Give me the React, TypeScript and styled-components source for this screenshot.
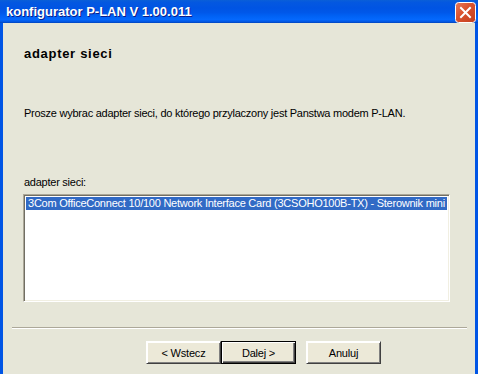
import React from "react";
import styled, { createGlobalStyle } from "styled-components";

const GlobalStyle = createGlobalStyle`
    html, body {
        margin: 0;
        padding: 0;
        background: #e6e6d8;
    }
    * {
        box-sizing: border-box;
    }
`;

const Window = styled.div`
    width: 478px;
    height: 374px;
    overflow: hidden;
    display: flex;
    flex-direction: column;
    font-family: "Liberation Sans", Arial, sans-serif;
    color: #000;
`;

const TitleBar = styled.div`
    height: 23px;
    flex: none;
    display: flex;
    align-items: center;
    justify-content: space-between;
    padding: 0 2px 0 6px;
    background: linear-gradient(
        to bottom,
        #0a5fd8 0%,
        #0458e0 10%,
        #0054e3 35%,
        #0058ea 55%,
        #0062f5 70%,
        #0468fd 85%,
        #0355e0 95%,
        #0043b8 100%
    );
`;

const Title = styled.span`
    font-family: "Liberation Sans", Arial, sans-serif;
    font-weight: bold;
    font-size: 13px;
    color: #fff;
    text-shadow: 1px 1px 0 #0a1e8a;
`;

const CloseButton = styled.div`
    width: 21px;
    height: 21px;
    display: flex;
    margin-top: 1px;
`;

const Body = styled.div`
    flex: 1;
    display: flex;
    flex-direction: column;
    border-left: 3px solid #0055e5;
    border-right: 3px solid #0055e5;
    padding-top: 24px;
`;

const Heading = styled.div`
    margin-left: 21px;
    font-weight: bold;
    font-size: 13px;
    line-height: 14px;
    letter-spacing: 0.7px;
`;

const Text = styled.div<{ $top: number }>`
    margin-left: 21px;
    margin-top: ${ (props) => props.$top + "px" };
    font-size: 11px;
    line-height: 13px;
    letter-spacing: -0.25px;
`;

const ListBox = styled.div`
    margin: 5px 0 0 20px;
    width: 427px;
    height: 108px;
    background: #fff;
    border-top: 1px solid #aca899;
    border-left: 1px solid #aca899;
    border-bottom: 1px solid #fff;
    border-right: 1px solid #fff;
    box-shadow: inset 1px 1px 0 #716f64, inset -1px -1px 0 #f1efe2;
    padding: 2px;
`;

const ListItem = styled.div<{ $selected?: boolean }>`
    height: 13px;
    font-size: 11px;
    line-height: 13px;
    letter-spacing: -0.24px;
    padding-left: 2px;
    white-space: nowrap;
    color: ${ (props) => props.$selected ? "#fff" : "#000" };
    background: ${ (props) => props.$selected ? "#316ac5" : "transparent" };
`;

const Separator = styled.div`
    margin: 25px 8px 0 9px;
    height: 2px;
    border-top: 1px solid #aca899;
    border-bottom: 1px solid #fff;
`;

const ButtonRow = styled.div`
    display: flex;
    margin-top: 12px;
    padding-left: 143px;
`;

const Button = styled.div<{ $default?: boolean; $gap?: number }>`
    width: 75px;
    height: 23px;
    margin-left: ${ (props) => (props.$gap || 0) + "px" };
    display: flex;
    align-items: center;
    justify-content: center;
    font-size: 11px;
    letter-spacing: -0.2px;
    background: #ece9d8;
    border: 1px solid ${ (props) => props.$default ? "#000" : "transparent" };
    box-shadow: ${ (props) => props.$default
        ? "inset 1px 1px 0 #fff, inset -1px -1px 0 #404040, inset -2px -2px 0 #808080"
        : "inset 1px 1px 0 #fff, inset -1px -1px 0 #808080" };
    ${ (props) => props.$default ? "" : "border-top-color: #fff; border-left-color: #fff; border-right-color: #404040; border-bottom-color: #404040;" }
`;

function CloseIcon() {
    return (
        <svg width="21" height="21" viewBox="0 0 21 21">
            <defs>
                <linearGradient id="cl" x1="0" y1="0" x2="1" y2="1">
                    <stop offset="0" stopColor="#e97a5c" />
                    <stop offset="0.45" stopColor="#d9512d" />
                    <stop offset="1" stopColor="#c2401f" />
                </linearGradient>
            </defs>
            <rect x="0.5" y="0.5" width="20" height="20" rx="3" fill="url(#cl)" stroke="#fff" />
            <path d="M6 6 L15 15 M15 6 L6 15" stroke="#fff" strokeWidth="2" strokeLinecap="square" />
        </svg>
    );
}

export default function App() {
    return (
        <Window>
            <GlobalStyle />
            <TitleBar>
                <Title>konfigurator P-LAN V 1.00.011</Title>
                <CloseButton><CloseIcon /></CloseButton>
            </TitleBar>
            <Body>
                <Heading>adapter sieci</Heading>
                <Text $top={46}>Prosze wybrac adapter sieci, do którego przylaczony jest Panstwa modem P-LAN.</Text>
                <Text $top={56}>adapter sieci:</Text>
                <ListBox>
                    <ListItem $selected>3Com OfficeConnect 10/100 Network Interface Card (3CSOHO100B-TX) - Sterownik mini</ListItem>
                </ListBox>
                <Separator />
                <ButtonRow>
                    <Button>&lt; Wstecz</Button>
                    <Button $default>Dalej &gt;</Button>
                    <Button $gap={10}>Anuluj</Button>
                </ButtonRow>
            </Body>
        </Window>
    );
}
